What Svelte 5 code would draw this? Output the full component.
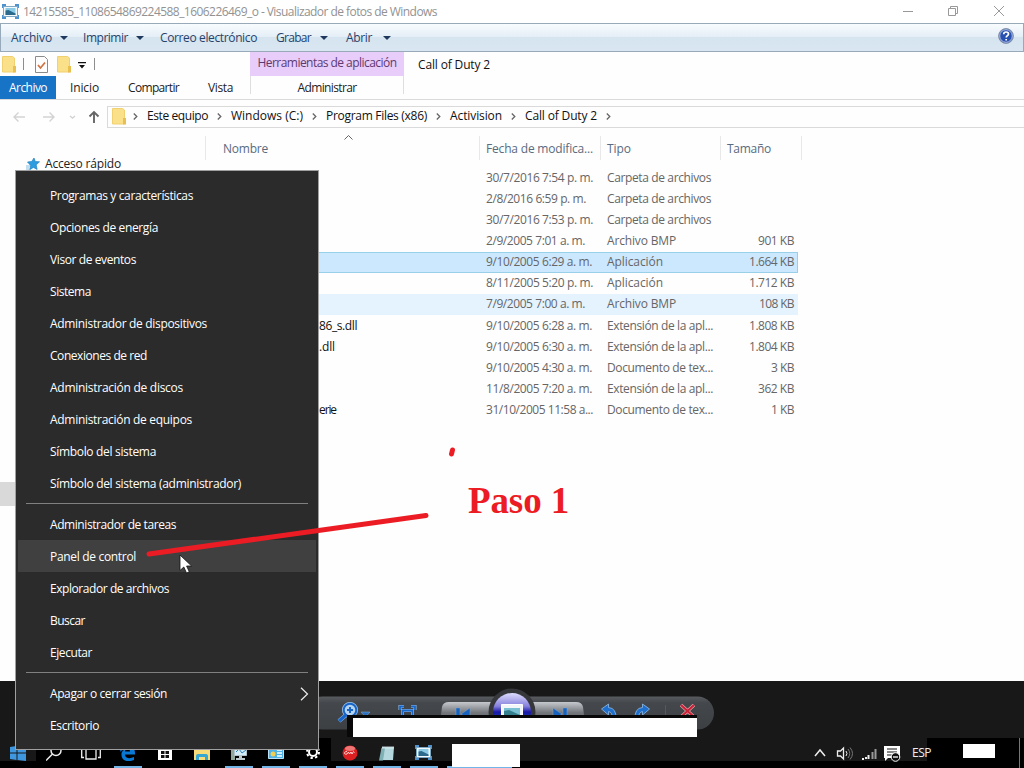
<script>
	const viewerMenus = [
		{ text: 'Archivo', width: 41, gap: 8, after: 15 },
		{ text: 'Imprimir', width: 45, gap: 8, after: 16 },
		{ text: 'Correo electrónico', width: 97, after: 19 },
		{ text: 'Grabar', width: 35, gap: 9, after: 18 },
		{ text: 'Abrir', width: 26, gap: 11, after: 0 }
	];

	const crumbs = [
		['Este equipo', 61],
		['Windows (C:)', 72],
		['Program Files (x86)', 101],
		['Activision', 52],
		['Call of Duty 2', 72]
	];

	const files = [
		{ date: ['30/7/2016 7:54 p. m.', 107], type: ['Carpeta de archivos', 104] },
		{ date: ['2/8/2016 6:59 p. m.', 100], type: ['Carpeta de archivos', 104] },
		{ date: ['30/7/2016 7:53 p. m.', 107], type: ['Carpeta de archivos', 104] },
		{ date: ['2/9/2005 7:01 a. m.', 99], type: ['Archivo BMP', 69], size: ['901 KB', 36] },
		{ date: ['9/10/2005 6:29 a. m.', 106], type: ['Aplicación', 56], size: ['1.664 KB', 45], state: 'selected' },
		{ date: ['8/11/2005 5:20 p. m.', 107], type: ['Aplicación', 56], size: ['1.712 KB', 45] },
		{ date: ['7/9/2005 7:00 a. m.', 99], type: ['Archivo BMP', 69], size: ['108 KB', 35], state: 'hovered' },
		{ name: ['86_s.dll', 38], date: ['9/10/2005 6:28 a. m.', 106], type: ['Extensión de la apl...', 106], size: ['1.808 KB', 45] },
		{ name: ['.dll', 16], date: ['9/10/2005 6:30 a. m.', 106], type: ['Extensión de la apl...', 106], size: ['1.804 KB', 45] },
		{ date: ['9/10/2005 4:30 a. m.', 106], type: ['Documento de tex...', 106], size: ['3 KB', 23] },
		{ date: ['11/8/2005 7:20 a. m.', 106], type: ['Extensión de la apl...', 106], size: ['362 KB', 36] },
		{ name: ['erie', 17], date: ['31/10/2005 11:58 a...', 107], type: ['Documento de tex...', 106], size: ['1 KB', 23] }
	];

	const startGroups = [
		[
			['Programas y características', 143],
			['Opciones de energía', 108],
			['Visor de eventos', 86],
			['Sistema', 41],
			['Administrador de dispositivos', 157],
			['Conexiones de red', 97],
			['Administración de discos', 133],
			['Administración de equipos', 142],
			['Símbolo del sistema', 106],
			['Símbolo del sistema (administrador)', 191]
		],
		[
			['Administrador de tareas', 126],
			['Panel de control', 86],
			['Explorador de archivos', 119],
			['Buscar', 35],
			['Ejecutar', 42]
		],
		[
			['Apagar o cerrar sesión', 117],
			['Escritorio', 49]
		]
	];

	const apps = ['edge', 'store', 'explorer', 'monitor', 'panel', 'settings', 'ares', 'notepad', 'photos'];
	const idleApps = ['store', 'explorer'];

	function fit(node, width) {
		const natural = node.getBoundingClientRect().width;
		node.style.letterSpacing = `${(width - natural) / node.textContent.length}px`;
	}
</script>

{#snippet label([text, width])}
	<span class="label" use:fit={width}>{text}</span>
{/snippet}

{#snippet folder()}
	<svg class="folder" width="14" height="18" viewBox="0 0 14 18">
		<path d="M.5 1.500h10l2 1.500v14H.5z" fill="#fbe08a" stroke="#f0d070" />
		<path d="M11 11h3v6.500h-3z" fill="#e9bf50" />
	</svg>
{/snippet}

{#snippet photo()}
	<svg width="17" height="15" viewBox="0 0 17 15">
		<path d="M0 0h4v4H0zM13 0h4v4h-4zM0 11h4v4H0zM13 11h4v4h-4z" fill="#4d91cf" />
		<path d="M1.500 2.500h14v10h-14z" fill="#f4f9fc" stroke="#7fa9c4" />
		<path d="M3.500 4h10v7h-10z" fill="#8ccbe6" />
		<path d="M3.500 6.500l3-.5 7 3.500V11h-10z" fill="#2b6a8c" />
	</svg>
{/snippet}

<div class="screen">
	<header class="titlebar">
		{@render photo()}
		{@render label(['14215585_1108654869224588_1606226469_o - Visualizador de fotos de Windows', 414])}
		<svg class="window-buttons" width="110" height="22" viewBox="0 0 110 22" fill="none" stroke="#999">
			<path d="M3 10.500h10M48.500 7.500h7v7h-7zM50.500 7.500v-2h7v7h-2M94 5l10 10M104 5l-10 10" />
		</svg>
	</header>

	<nav class="viewer-menu">
		{#each viewerMenus as menu}
			<div class="viewer-item" style:margin-right="{menu.after}px" style:gap="{menu.gap ?? 0}px">
				{@render label([menu.text, menu.width])}
				{#if menu.gap}
					<svg width="8" height="4" viewBox="0 0 8 4"><path d="M0 0h8L4 4z" fill="#1e395b" /></svg>
				{/if}
			</div>
		{/each}
		<svg class="help" width="16" height="16" viewBox="0 0 16 16">
			<circle cx="8" cy="8" r="7.400" fill="#2850b0" stroke="#8a93a8" />
			<circle cx="8" cy="8" r="6.300" fill="none" stroke="#d5def0" stroke-width=".8" />
			<path d="M5.700 6.200c0-3 4.800-2.800 4.800-.2 0 1.700-2.300 1.700-2.300 3.600M8.200 11v1.600" fill="none" stroke="#fff" stroke-width="1.700" />
		</svg>
	</nav>

	<main class="explorer">
		<div class="ribbon">
			<div class="quick">
				{@render folder()}
				<i class="divider"></i>
				<svg class="check" width="13" height="17" viewBox="0 0 13 17" fill="none">
					<path d="M.5.500h9l3 3v13H.5z" fill="#fdfdfd" stroke="#8b8b8b" />
					<path d="M3 9l2.500 3L10 6.500" stroke="#d0703c" stroke-width="1.700" />
				</svg>
				{@render folder()}
				<svg class="more" width="8" height="7" viewBox="0 0 8 7"><path d="M0 0h8v1.300H0zM1 3h6L4 6.500z" fill="#111" /></svg>
				<i class="divider"></i>
			</div>
			<div class="tool-title">{@render label(['Herramientas de aplicación', 139])}</div>
			<div class="folder-title">{@render label(['Call of Duty 2', 72])}</div>
			<div class="tabs">
				<span class="tab file">{@render label(['Archivo', 38])}</span>
				<span class="tab home">{@render label(['Inicio', 29])}</span>
				<span class="tab share">{@render label(['Compartir', 51])}</span>
				<span class="tab view">{@render label(['Vista', 25])}</span>
			</div>
			<div class="tool-tab">{@render label(['Administrar', 59])}</div>
		</div>

		<div class="address">
			<svg class="arrows" width="107" height="22" viewBox="0 0 107 22" fill="none" stroke="#d3d3d3" stroke-width="1.400">
				<path d="M25 11H14M18.500 6.500L14 11l4.500 4.500M43 11h11M49.500 6.500L54 11l-4.500 4.500M70 10l2.500 2 2.500-2" />
				<path d="M94 17V6M89.500 10.500L94 6l4.500 4.500" stroke="#666" stroke-width="1.900" />
			</svg>
			<div class="path">
				{@render folder()}
				{#each crumbs as crumb}
					<svg class="chevron" width="5" height="7" viewBox="0 0 5 7"><path d="M.8.500l3 3-3 3" fill="none" stroke="#666" stroke-width="1.300" /></svg>
					{@render label(crumb)}
				{/each}
				<svg class="chevron" width="5" height="7" viewBox="0 0 5 7"><path d="M.8.500l3 3-3 3" fill="none" stroke="#666" stroke-width="1.300" /></svg>
			</div>
		</div>

		<div class="content">
			<aside class="sidebar">
				<div class="quick-access">
					<svg width="14" height="14" viewBox="0 0 14 14">
						<path d="M8 1l1.300 3.600 4.200.2-3.300 3 .9 4.600-3.700-2-3.700 2.300.9-4.300L1.500 5l4.200-.5z" fill="#2d9de0" stroke="#2583c2" stroke-width=".7" />
						<path d="M0 9h4M0 11h3M0 13h3" stroke="#86bde0" />
					</svg>
					{@render label(['Acceso rápido', 76])}
				</div>
				<div class="side-selection"></div>
			</aside>
			<section class="listing">
				<div class="row head">
					<span class="cell name">{@render label(['Nombre', 45])}
						<svg class="sort" width="9" height="6" viewBox="0 0 9 6"><path d="M.5 5.500l4-4 4 4" fill="none" stroke="#666" /></svg>
					</span>
					<span class="cell">{@render label(['Fecha de modifica...', 107])}</span>
					<span class="cell">{@render label(['Tipo', 24])}</span>
					<span class="cell">{@render label(['Tamaño', 44])}</span>
				</div>
				<div class="files">
					{#each files as file}
						<div class="row {file.state ?? ''}">
							<span class="cell name">{#if file.name}{@render label(file.name)}{/if}</span>
							<span class="cell">{@render label(file.date)}</span>
							<span class="cell">{@render label(file.type)}</span>
							<span class="cell size">{#if file.size}{@render label(file.size)}{/if}</span>
						</div>
					{/each}
				</div>
			</section>
		</div>
	</main>

	<section class="viewer-controls">
		<svg width="400" height="57" viewBox="0 0 400 57">
			<defs>
				<linearGradient id="pill" x2="0" y2="1"><stop stop-color="#585b5f" /><stop offset=".2" stop-color="#44474b" /><stop offset="1" stop-color="#3d4043" /></linearGradient>
				<linearGradient id="key" x2="0" y2="1"><stop stop-color="#c6c9cd" /><stop offset=".5" stop-color="#74777c" /><stop offset="1" stop-color="#53565a" /></linearGradient>
				<linearGradient id="orb" x2="0" y2="1"><stop stop-color="#dedcff" /><stop offset=".35" stop-color="#8580db" /><stop offset=".5" stop-color="#1917a8" /><stop offset="1" stop-color="#18b" /></linearGradient>
			</defs>
			<rect x="-20" y="15.500" width="408" height="33" rx="16.500" transform="translate(10)" fill="url(#pill)" />
			<path d="M124 42l2-16q1-5 7-5h43v21zM217 21h43q6 0 7 5l2 16h-52z" fill="url(#key)" />
			<circle cx="196" cy="31" r="23.500" fill="#35373b" />
			<circle cx="196" cy="31" r="19" fill="url(#orb)" />
			<g fill="none" stroke="#9fc8f2" stroke-width="4">
				<circle cx="34" cy="29" r="6" /><path d="M30 34l-7 6" />
			</g>
			<g fill="none" stroke="#1765c8" stroke-width="2">
				<circle cx="34" cy="29" r="6.300" fill="#b5d2ef" /><path d="M30 34l-7 6" stroke-width="3.200" />
				<path d="M34 26v6M31 29h6" />
			</g>
			<g fill="none" stroke="#8ebdec" stroke-width="3">
				<path d="M84 29v-3.500h4M95 25.500h4V29M86.500 29.500h10v9h-10z" />
			</g>
			<g fill="none" stroke="#1765c8" stroke-width="1.800">
				<path d="M84 29v-3.500h4M95 25.500h4V29M86.500 29.500h10v9h-10z" />
			</g>
			<g stroke="#8ebdec" stroke-width=".8" fill="#1f70cc">
				<path d="M285.500 28l7-5v3.500q8 .5 7.500 11.500h-3.500q0-7-4-7.500V34z" />
				<path d="M333.500 28l-7-5v3.500q-8 .5-7.500 11.500h3.500q0-7 4-7.500V34z" />
			</g>
			<path d="M45 31h9l-4.500 5z" fill="#2a70bd" stroke="#8ab0da" stroke-width=".5" />
			<path d="M140 27h4v12h-4zM145 33l9-6v12zM247 27h4v12h-4zM246 33l-9-6v12z" fill="#1762bc" stroke="#82a9d2" stroke-width=".5" />
			<path d="M185.500 23.500h21v16h-21z" fill="#f3f6f8" stroke="#fff" />
			<path d="M188 27h16v9h-16z" fill="#7ac0d3" /><path d="M188 30l5-1 11 5v2h-16z" fill="#337f8d" />
			<path d="M349.500 24v20" stroke="#55585c" />
			<path d="M365 24l13 12M378 24l-13 12" stroke="#e5a5ad" stroke-width="3.400" />
			<path d="M365 24l13 12M378 24l-13 12" stroke="#c92237" stroke-width="2.200" />
		</svg>
		<div class="caption-mask"></div>
	</section>

	<footer class="taskbar">
		<div class="launch start">
			<svg width="16" height="16" viewBox="0 0 16 16"><path d="M0 2l6.500-1v6.500H0zM7.500.800L16 0v7.500H7.500zM0 8.500h6.500V15L0 14zM7.500 8.500H16V16l-8.500-1z" fill="#3f97df" /></svg>
		</div>
		<div class="launch">
			<svg width="16" height="16" viewBox="0 0 16 16" fill="none" stroke="#eee" stroke-width="1.500"><circle cx="10" cy="5.500" r="5" /><path d="M6.500 9L0 15.500" /></svg>
		</div>
		<div class="launch">
			<svg width="20" height="16" viewBox="0 0 20 16" fill="none" stroke="#eee" stroke-width="1.300"><path d="M5 1h10v13H5zM3 3H.700v9.500H3M17 3h2.300v9.500H17" /></svg>
		</div>
		{#each apps as app, i}
			<div class="launch app" class:idle={idleApps.includes(app)} class:lit={i > 5}>
				{#if app === 'edge'}
					<svg width="15" height="16" viewBox="0 0 15 16"><path d="M0 8C0-3 15-2 15 8v1.500H5c0 4 5 4.500 9 2.500v3C7 18 1 15 1.500 9c0-3 3-4.500 5-5C4 5 0 5 0 8zm5-1.500h5c0-4-5-3.500-5 0z" fill="#0978d4" /></svg>
				{:else if app === 'store'}
					<svg width="14" height="16" viewBox="0 0 14 16"><path d="M4 4V1h6v3" fill="none" stroke="#fff" /><path d="M0 4h14v11H0z" fill="#fff" /><path d="M3 6h3.500v3H3zM7.500 6H11v3H7.500zM3 10h3.500v3H3zM7.500 10H11v3H7.500z" fill="#111" /></svg>
				{:else if app === 'explorer'}
					<svg width="16" height="16" viewBox="0 0 16 16"><path d="M0 1h6l2 2h8v12H0z" fill="#f7dc78" /><path d="M2 15v-4q0-2 2-2h8q2 0 2 2v4h-3v-3H5v3z" fill="#36a7d3" /></svg>
				{:else if app === 'monitor'}
					<svg width="16" height="16" viewBox="0 0 16 16"><path d="M0 5h4v10H0z" fill="#92a599" /><path d="M3.500 1.500h12v9h-12z" fill="#d5ecf7" stroke="#b2c2ca" /><path d="M5 7l3-3 3 4 4-3" fill="none" stroke="#2e80b8" /><path d="M8 11h3v2h3v2H5v-2h3z" fill="#bcc8cc" /></svg>
				{:else if app === 'panel'}
					<svg width="16" height="16" viewBox="0 0 16 16"><path d="M.5 1.500h15v12H.5z" fill="#4db0e6" stroke="#b9e3f8" /><circle cx="5" cy="9" r="2.500" fill="#f2cf53" /><path d="M9 5h5M9 8h5M9 11h5" stroke="#fff" stroke-width="1.300" /></svg>
				{:else if app === 'settings'}
					<svg width="14" height="14" viewBox="0 0 14 14" fill="none" stroke="#fff"><circle cx="7" cy="7" r="4" stroke-width="2" /><circle cx="7" cy="7" r="6" stroke-width="2" stroke-dasharray="2.350 2.350" /></svg>
				{:else if app === 'ares'}
					<svg width="16" height="16" viewBox="0 0 16 16"><circle cx="8" cy="8" r="7.500" fill="#dc2021" /><ellipse cx="8" cy="3.500" rx="5" ry="2.500" fill="#ed7775" /><path d="M5 6.500c-3.500 0-3.500 3.500 0 2.500l1.500-2 1 2 1.500-2 1 2 1.500-2.500 1 1" fill="none" stroke="#ffd5d2" /></svg>
				{:else if app === 'notepad'}
					<svg width="15" height="16" viewBox="0 0 15 16"><path d="M3 2h12l-1 13H1z" fill="#b4d8de" /><path d="M0 15.500L2.500 3H6L4 15.500z" fill="#7fb0b4" /><path d="M4 1v3M6 1v3M8 1v3M10 1v3M12 1v3M14 1v3" stroke="#e3f2f5" stroke-width=".8" /></svg>
				{:else if app === 'photos'}
					{@render photo()}
				{/if}
			</div>
		{/each}
		<div class="window-mask"></div>
		<div class="tray">
			<svg width="66" height="18" viewBox="0 0 66 18" fill="none" stroke="#eee">
				<path d="M1 12l5-6 5 6" stroke-width="1.500" />
				<path d="M23.500 7h3l3-3v11l-3-3h-3z" stroke-width="1.300" /><path d="M32 7q2 2.500 0 5" /><path d="M34 5q3.500 4.500 0 9M36 3.500q5 6 0 12" stroke="#777" />
				<path d="M48 15h2M51 14h2M54.500 15v-4" stroke-width="2" /><path d="M58.500 15V8M61.500 15V5" stroke="#999" stroke-width="2" />
			</svg>
			<svg class="notice" width="17" height="17" viewBox="0 0 17 17"><path d="M0 1h16v12H4l-3 3v-3H0z" fill="#fff" /><path d="M3 4h10M3 7h10M3 10h5" stroke="#111" /><circle cx="11.500" cy="12" r="4.300" fill="#111" stroke="#fff" /><path d="M9 12h5" stroke="#fff" stroke-width="1.300" /></svg>
			<span class="language">{@render label(['ESP', 19])}</span>
			<div class="clock"><i></i></div>
		</div>
	</footer>

	<div class="start-menu">
		{#each startGroups as group, g}
			{#if g > 0}<hr />{/if}
			{#each group as item}
				<div class="start-item" class:active={item[0] === 'Panel de control'}>
					{@render label(item)}
					{#if item[0].startsWith('Apagar')}
						<svg width="9" height="14" viewBox="0 0 9 14"><path d="M1 .7L7.500 7 1 13.300" fill="none" stroke="#eee" stroke-width="1.200" /></svg>
					{/if}
				</div>
			{/each}
		{/each}
	</div>

	<svg class="marks" width="1024" height="768" viewBox="0 0 1024 768">
		<path d="M149 554L426 515.500M452.500 450l-1 4" fill="none" stroke="#ec1c24" stroke-width="5" stroke-linecap="round" />
		<path d="M180 555v15.500l3.800-3.500 2.700 6 2.800-1.200-2.700-5.800h5z" fill="#fff" stroke="#111" stroke-width=".8" />
	</svg>
	<strong class="step">{@render label(['Paso 1', 101])}</strong>
</div>

<style>
	:global(body) {
		margin: 0;
	}

	.screen {
		position: relative;
		display: flex;
		flex-direction: column;
		width: 1024px;
		height: 768px;
		overflow: hidden;
		background: #fff;
		color: #222;
		font: 12px/16px 'Open Sans', 'Noto Sans', sans-serif;
	}

	.screen *,
	.screen {
		box-sizing: border-box;
	}

	svg {
		display: block;
		flex: none;
	}

	.label {
		flex: none;
		white-space: pre;
	}

	.titlebar {
		display: flex;
		align-items: center;
		gap: 4px;
		height: 23px;
		padding-left: 2px;
		color: #929292;
	}

	.window-buttons {
		margin: 0 14px 0 auto;
	}

	.viewer-menu {
		display: flex;
		align-items: center;
		height: 29px;
		padding: 0 10px;
		border: 1px solid #98a9b9;
		background: linear-gradient(#f8fcfe, #e5eff7 46%, #d5e4ef 50%, #dae7f2);
		color: #26436b;
	}

	.viewer-item {
		display: flex;
		align-items: center;
	}

	.help {
		margin: -4px -1px 0 auto;
	}

	.explorer {
		height: 629px;
		background: #fefefe;
	}

	.ribbon {
		display: grid;
		grid-template: 24px 23px / 250px 154px 1fr;
		height: 48px;
		border-bottom: 1px solid #dadada;
	}

	.quick {
		display: flex;
		align-items: center;
		padding-left: 2px;
	}

	.divider {
		width: 1px;
		height: 12px;
		margin: 0 11px 0 7px;
		background: #8d8d8d;
	}

	.check {
		margin-right: 9px;
	}

	.more {
		margin: 3px 1px 0 7px;
	}

	.tool-title {
		padding-top: 3px;
		background: #e8ccfa;
		color: #5c3a71;
		text-align: center;
	}

	.folder-title {
		padding: 5px 0 0 14px;
		color: #111;
	}

	.tabs {
		display: flex;
	}

	.tab {
		padding-top: 4px;
	}

	.file {
		width: 56px;
		padding-left: 9px;
		background: #1673c6;
		color: #fff;
	}

	.home {
		width: 72px;
		padding-left: 14px;
	}

	.share {
		width: 80px;
	}

	.tool-tab {
		height: 18px;
		padding-top: 4px;
		border: solid #dedede;
		border-width: 0 1px;
		text-align: center;
	}

	.address {
		display: flex;
		height: 28px;
		padding-top: 6px;
	}

	.path {
		display: flex;
		flex: 1;
		align-items: center;
		padding: 0 0 2px 4px;
		border: 1px solid #dadada;
		border-right: 0;
		color: #111;
	}

	.chevron {
		margin: 0 9px;
	}

	.path .folder + .chevron {
		margin-left: 7px;
	}

	.content {
		display: flex;
	}

	.sidebar {
		width: 205px;
		padding-top: 28px;
	}

	.quick-access {
		display: flex;
		align-items: center;
		gap: 5px;
		padding-left: 26px;
	}

	.side-selection {
		width: 16px;
		height: 24px;
		margin-top: 310px;
		background: #d9d9d9;
	}

	.listing {
		padding-top: 8px;
	}

	.row {
		display: grid;
		grid-template-columns: 274px 121px 120px 78px;
		width: 593px;
		color: #666;
	}

	.cell {
		display: flex;
		align-items: center;
		padding-left: 7px;
	}

	.cell.name {
		padding-left: 114px;
		color: #111;
	}

	.size {
		justify-content: flex-end;
		padding: 0 4px 0 0;
	}

	.head {
		grid-template-columns: 274px 121px 120px 82px;
		width: 597px;
		height: 24px;
		color: #596b80;
	}

	.head .cell {
		padding-top: 2px;
		border-left: 1px solid #e8e8e8;
		padding-left: 6px;
	}

	.head .cell.name {
		padding-left: 17px;
		color: #596b80;
	}

	.head .cell:last-child {
		border-right: 1px solid #e8e8e8;
	}

	.sort {
		margin: -24px 0 0 76px;
	}

	.files {
		display: grid;
		grid-auto-rows: 21.15px;
		padding-top: 7px;
	}

	.selected {
		background: #cce8ff;
		box-shadow: inset 0 0 0 1px #99cfe8;
	}

	.hovered {
		background: #e5f3ff;
	}

	.viewer-controls {
		position: relative;
		height: 57px;
		padding-left: 316px;
		background: #181818;
	}

	.caption-mask {
		position: absolute;
		left: 347px;
		top: 34px;
		width: 350px;
		height: 22px;
		border: solid #080808;
		border-width: 3px 0 0 6px;
		background: #fff;
	}

	.taskbar {
		display: flex;
		height: 30px;
		background: linear-gradient(#181818 23px, #000 23px);
	}

	.launch {
		display: flex;
		justify-content: center;
		width: 36.500px;
		padding-top: 7px;
		background: #000;
	}

	.start {
		width: 36px;
		background: none;
	}

	.app {
		width: 37px;
		background: linear-gradient(#74b5e8, #74b5e8) center bottom / 28px 2px no-repeat #000;
	}

	.app.lit {
		background-color: transparent;
	}

	.app.idle {
		background: #000;
	}

	.window-mask {
		width: 78px;
		border: solid transparent;
		border-width: 6px 0 1px 10px;
		background:
			linear-gradient(#fff, #fff) padding-box,
			linear-gradient(#74b5e8, #74b5e8) 5px bottom / 65px 2px no-repeat border-box;
	}

	.tray {
		display: flex;
		align-items: center;
		margin-left: auto;
		color: #eee;
	}

	.notice {
		margin: 0 11px 0 4px;
	}

	.language {
		z-index: 1;
		width: 15px;
	}

	.clock {
		width: 97px;
		height: 30px;
		padding: 6px 4px 0 36px;
		background: linear-gradient(#777, #777) 92px 0 / 1px 100% no-repeat #000;
	}

	.clock i {
		display: block;
		width: 32px;
		height: 14px;
		background: #fff;
	}

	.start-menu {
		position: absolute;
		left: 15px;
		top: 170px;
		width: 304px;
		height: 580px;
		padding: 8px 2px;
		border: 1px solid #a0a0a0;
		background: #2b2b2b;
		color: #fff;
	}

	.start-item {
		display: flex;
		align-items: center;
		justify-content: space-between;
		height: 32px;
		padding: 1px 7px 0 32px;
	}

	.start-item.active {
		background: #404040;
	}

	hr {
		height: 1px;
		margin: 4px 8px;
		border: 0;
		background: #808080;
	}

	.marks {
		position: absolute;
		inset: 0;
	}

	.step {
		position: absolute;
		left: 468px;
		top: 480px;
		color: #ec1c24;
		font: bold 37px/42px 'Liberation Serif', serif;
	}
</style>
